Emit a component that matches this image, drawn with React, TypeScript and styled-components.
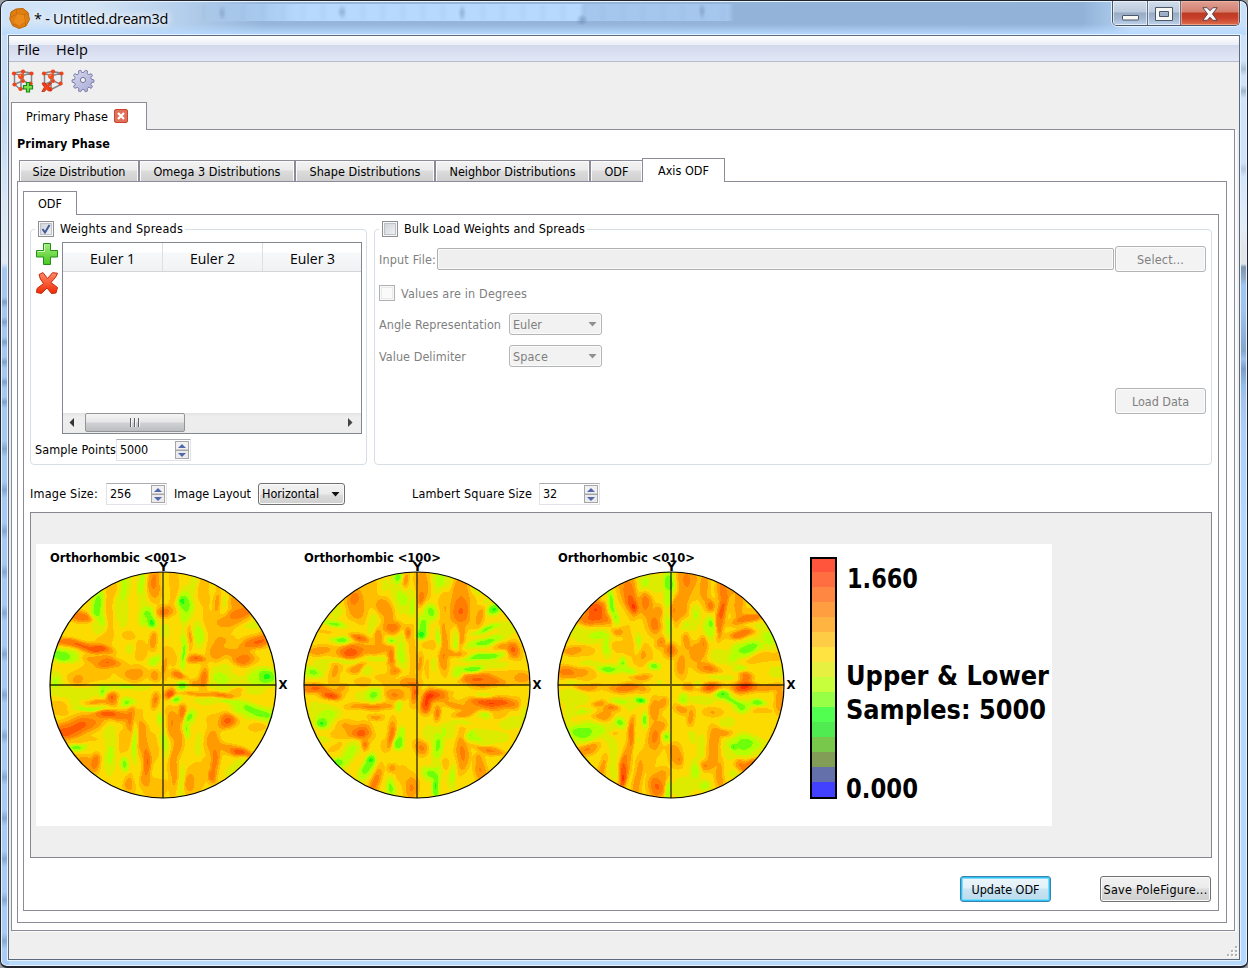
import React, { useLayoutEffect, useMemo, useRef, useState } from "react";
import styled, { createGlobalStyle, css } from "styled-components";

const UI = `"DejaVu Sans Condensed", "DejaVu Sans", sans-serif`;
const SEGOE = `"Open Sans", "Noto Sans", sans-serif`;
const LINE = "#8b8c97";

const Global = createGlobalStyle`
  * { box-sizing: border-box; }
  html, body { margin: 0; padding: 0; background: #9b9da0; overflow: hidden; }
  body { font: 12.5px/16px ${UI}; color: #000; }
`;

/* ---------- text ---------- */

const FitSpan = styled.span<{ $w: number; $segoe?: boolean; $size?: number; $bold?: boolean; $muted?: boolean }>`
  display: block;
  flex: none;
  width: ${(p) => p.$w}px;
  white-space: pre;
  font-family: ${(p) => (p.$segoe ? SEGOE : UI)};
  font-size: ${(p) => p.$size ?? 12.5}px;
  font-weight: ${(p) => (p.$bold ? 700 : 400)};
  color: ${(p) => (p.$muted ? "#7f7f7f" : "#000")};
`;

type FitProps = { w: number; children: string; segoe?: boolean; size?: number; bold?: boolean; muted?: boolean };

/** Label that tracks its letters so that the string fills exactly `w` pixels. */
function Fit({ w, children, segoe, size, bold, muted }: FitProps) {
  const ref = useRef<HTMLElement>(null);
  const [spacing, setSpacing] = useState(0);
  useLayoutEffect(() => {
    const el = ref.current;
    if (el) setSpacing((w - el.getBoundingClientRect().width) / children.length);
  }, [w, children]);
  return (
    <FitSpan $w={w} $segoe={segoe} $size={size} $bold={bold} $muted={muted}>
      <span ref={ref} style={{ letterSpacing: spacing }}>{children}</span>
    </FitSpan>
  );
}

/* ---------- window chrome ---------- */

const Window = styled.div`
  width: 1248px;
  height: 968px;
  display: flex;
  flex-direction: column;
  border: 1px solid #20242e;
  border-width: 1px 1px 2px 1px;
  border-radius: 8px 8px 7px 7px;
  box-shadow: inset 0 0 0 1px #e6f1fc;
  padding: 0 8px 6px 7px;
  background:
    linear-gradient(180deg, #c9e0fa 0, #cfe4fb 60px, #a9c0d9 68px, #cfe4fb 75px, #cfe4fb 84px, #9fb6cf 90px, #cfe4fb 97px, #cfe4fb 162px, #b3cae4 168px, #d3e6fb 176px, #e3edf8 225px, #e5e5e8 245px, #e5e5e8 263px, #7f95ad 266px, #8fa9c6 276px, #a0c6f0 285px, #9fc3ec 310px, #86a6cb 350px, #9dc1ea 358px, #7f9ec4 368px, #94bfe8 385px, #a6c4ec 400px, #aed0f6 430px, #b4d8ff 520px, #b4d8ff 100%) 100% 0 / 8px 100% no-repeat,
    repeating-linear-gradient(180deg, transparent 0 6px, rgba(70, 105, 145, .42) 11px, transparent 17px 20px) 1px 290px / 7px 120px no-repeat,
    repeating-linear-gradient(180deg, transparent 0 10px, rgba(80, 115, 155, .4) 18px, transparent 26px 41px) 1px 430px / 7px 520px no-repeat,
    linear-gradient(180deg, #c6ddf6 0, #c0daf6 120px, #d9e6f5 200px, #e2ebf5 262px, #a6c8ef 268px, #a9cdf5 100%) 0 0 / 8px 100% no-repeat,
    #b9dafb;
`;

const TitleBar = styled.header`
  height: 34px;
  flex: none;
  display: flex;
  align-items: flex-start;
  margin: 0 -7px 0 -6px;
  padding-right: 6px;
  border-top: 1px solid #e9f3fd;
  border-radius: 7px 7px 0 0;
  background:
    radial-gradient(ellipse 5px 7px at 340px 10px, rgba(70, 100, 140, .3), transparent) no-repeat,
    radial-gradient(ellipse 4px 8px at 460px 11px, rgba(70, 100, 140, .3), transparent) no-repeat,
    radial-gradient(ellipse 6px 6px at 580px 18px, rgba(70, 100, 140, .4), transparent) no-repeat,
    radial-gradient(ellipse 4px 8px at 700px 9px, rgba(70, 100, 140, .3), transparent) no-repeat,
    radial-gradient(ellipse 4px 7px at 220px 11px, rgba(70, 100, 140, .25), transparent) no-repeat,
    repeating-linear-gradient(90deg, rgba(120, 155, 200, .08) 0 2px, transparent 6px 16px, rgba(120, 155, 200, .08) 20px) 200px 3px / 530px 15px no-repeat,
    linear-gradient(90deg, rgba(184, 218, 253, 0), #b6d9fd 100px, #b6d9fd 378px, #a6c7ed 382px, #a6c7ed 526px, transparent 532px) 200px 2px / 540px 17px no-repeat,
    linear-gradient(180deg, transparent 22px, #b7daff 33px) no-repeat,
    linear-gradient(90deg, #cfe3f8 0, #d3e4f5 90px, #b4cfec 180px, #95b5da 260px, #92b2d8 1080px, #a6c6e9 1110px, #c9e0fa 1130px);
`;

const TitleIcon = styled.svg`
  margin: 6px 0 0 7px;
`;

const TitleText = styled.div`
  flex: 1;
  padding: 7px 0 0 4px;
  line-height: 20px;
  text-shadow: 0 0 6px #fff, 0 0 8px #fff;
`;

const Controls = styled.div`
  display: flex;
  height: 25px;
  margin-top: -1px;
  border: 1px solid #46566b;
  border-top: 0;
  border-radius: 0 0 5px 5px;
  overflow: hidden;
  box-shadow: 0 1px 0 #e4f0fc, 1px 0 0 #e4f0fc, -1px 0 0 #e4f0fc;
`;

const ControlButton = styled.div<{ $w: number; $close?: boolean; $drop?: number }>`
  width: ${(p) => p.$w}px;
  display: flex;
  align-items: center;
  justify-content: center;
  padding-top: ${(p) => p.$drop ?? 0}px;
  border-right: ${(p) => (p.$close ? 0 : "1px solid #5d6f86")};
  box-shadow: inset 0 0 0 1px ${(p) => (p.$close ? "rgba(255,190,170,.6)" : "rgba(255,255,255,.6)")};
  background: ${(p) =>
    p.$close
      ? "linear-gradient(180deg, #dfa093 0, #d4806f 11px, #bd3a22 12px, #c8402a 17px, #de6f4c 24px)"
      : "linear-gradient(180deg, #d3deec 0, #bac9dc 11px, #97abc4 12px, #a4b8d1 18px, #bfd4ec 24px)"};
`;

const Client = styled.main`
  flex: 1;
  width: 1232px;
  display: flex;
  flex-direction: column;
  border: 1px solid #5d6a7b;
  box-shadow: 0 0 0 1px #e6f2fe;
  background: #efefef;
  overflow: hidden;
`;

const MenuBar = styled.nav`
  height: 26px;
  flex: none;
  display: flex;
  align-items: center;
  gap: 16px;
  padding: 2px 0 0 8px;
  line-height: 24px;
  border-bottom: 1px solid #b6bccc;
  background: linear-gradient(180deg, #fff 0, #e9edf6 9px, #d3d9ec 9px, #e2e7f6 25px);
`;

const ToolBar = styled.div`
  height: 40px;
  flex: none;
  display: flex;
  gap: 6px;
  padding: 7px 0 0 2px;
`;

/* ---------- tabs and panes ---------- */

const TabStrip = styled.div<{ $ml: number }>`
  display: flex;
  align-items: flex-end;
  flex: none;
  margin-left: ${(p) => p.$ml}px;
  margin-bottom: -1px;
  z-index: 1;
`;

const Tab = styled.div<{ $w: number; $h: number; $active?: boolean; $joined?: boolean }>`
  width: ${(p) => p.$w}px;
  height: ${(p) => p.$h}px;
  display: flex;
  align-items: center;
  justify-content: center;
  gap: 6px;
  border: 1px solid ${LINE};
  ${(p) =>
    p.$active
      ? css`
          border-bottom: 0;
          background: #fff;
        `
      : css`
          padding-top: 1px;
          background: linear-gradient(180deg, #f3f3f3 0, #ebebeb 9px, #dcdcdc 10px, #cfcfcf 100%);
          box-shadow: inset 1px 1px 0 #fbfbfb, inset -1px 0 0 #fbfbfb;
        `}
  ${(p) => p.$joined && "border-right: 0;"}
`;

const CloseBadge = styled.svg`
  flex: none;
  margin: -2px 4px 0 0;
`;

const Pane = styled.section<{ $w: number; $h: number; $pad: string }>`
  width: ${(p) => p.$w}px;
  height: ${(p) => p.$h}px;
  flex: none;
  padding: ${(p) => p.$pad};
  border: 1px solid ${LINE};
  background: #fff;
`;

const OuterPane = styled(Pane)`
  margin-left: 2px;
  box-shadow: 2px 1px 0 #fbfbfb;
`;

const Heading = styled.div`
  height: 28px;
  padding-top: 6px;
`;

const Groups = styled.div`
  display: flex;
  gap: 7px;
`;

const Group = styled.div<{ $w: number }>`
  width: ${(p) => p.$w}px;
  height: 236px;
  border: 1px solid #d5dfe5;
  border-radius: 4px;
`;

const GroupTitle = styled.div<{ $gap: number }>`
  display: flex;
  align-items: flex-start;
  width: max-content;
  height: 17px;
  gap: ${(p) => p.$gap}px;
  margin: -9px 0 0 4px;
  padding: 0 2px 0 3px;
  background: #fff;
`;

const Box = styled.span<{ $muted?: boolean }>`
  width: 16px;
  height: 16px;
  flex: none;
  border: 1px solid ${(p) => (p.$muted ? "#b1b1b3" : "#8e8f8f")};
  background: ${(p) => (p.$muted ? "#fafafa" : "linear-gradient(135deg, #cbcfd5, #f6f6f6)")};
  box-shadow: inset 0 0 0 1px #f8f8f8, inset 0 0 0 2px ${(p) => (p.$muted ? "#e8eaee" : "#bcc1cb")};
`;

const GroupBody = styled.div`
  display: flex;
  gap: 4px;
  margin-top: 4px;
  padding-left: 5px;
`;

const IconColumn = styled.div`
  display: flex;
  flex-direction: column;
  gap: 7px;
  padding-top: 1px;
  width: 22px;
`;

const Table = styled.div`
  width: 300px;
  height: 192px;
  display: flex;
  flex-direction: column;
  border: 1px solid #828790;
  background: #fff;
`;

const HeaderRow = styled.div`
  display: flex;
  height: 29px;
  border-bottom: 1px solid #d5d5d5;
  background: linear-gradient(180deg, #fff 0, #fff 9px, #f7f8fa 10px, #f1f2f4 100%);
`;

const HeaderCell = styled.div`
  width: 100px;
  flex: none;
  display: flex;
  justify-content: center;
  align-items: center;
  padding-top: 3px;
  border-right: 1px solid #dedfe1;
  &:last-child { border-right: 0; width: 99px; }
`;

const ScrollBar = styled.div`
  height: 20px;
  margin-top: auto;
  display: flex;
  align-items: center;
  padding: 0 4px 2px 5px;
  background: linear-gradient(180deg, #e3e3e3, #eee 4px, #ececec);
`;

const Thumb = styled.div`
  width: 100px;
  height: 19px;
  margin: 0 auto 0 10px;
  display: flex;
  align-items: center;
  justify-content: center;
  gap: 2px;
  border: 1px solid #959595;
  border-radius: 2px;
  background: linear-gradient(180deg, #f5f5f5 0, #e6e6e8 8px, #d0d1d4 9px, #bcbdc0 100%);
`;

const Grip = styled.i`
  width: 2px;
  height: 9px;
  border-left: 1px solid #5f6063;
  background: #f6f6f6;
`;

const Row = styled.div<{ $mt?: number; $pl?: number; $h?: number }>`
  display: flex;
  align-items: center;
  height: ${(p) => p.$h ?? 22}px;
  margin-top: ${(p) => p.$mt ?? 0}px;
  padding-left: ${(p) => p.$pl ?? 4}px;
`;

const Caption = styled.div`
  flex: none;
  padding-top: 1px;
`;

const SpinBox = styled.div<{ $w: number }>`
  width: ${(p) => p.$w}px;
  height: 22px;
  flex: none;
  display: flex;
  justify-content: space-between;
  align-items: center;
  padding: 0 1px 0 3px;
  border: 1px solid #e2e3ea;
  border-top-color: #abadb3;
  background: #fff;
`;

const Spinner = ({ w, tw, value }: { w: number; tw: number; value: string }) => (
  <SpinBox $w={w}>
    <Fit w={tw}>{value}</Fit>
    <svg width="14" height="18" viewBox="0 0 14 18">
      <rect x=".5" y=".5" width="13" height="8.500" fill="#f1f1f1" stroke="#a7a7a7" />
      <rect x=".5" y="9.500" width="13" height="8" fill="#ebebeb" stroke="#a7a7a7" />
      <path d="M3 7 7 3l4 4z" fill="#5368ac" />
      <path d="M3 12h8l-4 4z" fill="#5368ac" />
    </svg>
  </SpinBox>
);

const ComboBox = styled.div<{ $w: number; $muted?: boolean }>`
  width: ${(p) => p.$w}px;
  height: 22px;
  flex: none;
  display: flex;
  align-items: center;
  justify-content: space-between;
  padding: ${(p) => (p.$muted ? 1 : 0)}px 4px 0 3px;
  border: 1px solid ${(p) => (p.$muted ? "#b1b5b5" : "#707070")};
  border-radius: 3px;
  box-shadow: inset 0 0 0 1px #fbfbfb;
  background: ${(p) =>
    p.$muted ? "#f2f2f2" : "linear-gradient(180deg, #f2f2f2 0, #ebebeb 10px, #dcdcdc 11px, #cfcfcf 100%)"};
`;

const Combo = ({ w, tw, value, muted }: { w: number; tw: number; value: string; muted?: boolean }) => (
  <ComboBox $w={w} $muted={muted}>
    <Fit w={tw} muted={muted}>{value}</Fit>
    <svg width="9" height="5"><path d="M.5 0h8l-4 4.500z" fill={muted ? "#8f8f8f" : "#111"} /></svg>
  </ComboBox>
);

const PathField = styled.div`
  width: 677px;
  height: 22px;
  margin: 0 1px;
  border: 1px solid #afb1b1;
  border-radius: 2px;
  box-shadow: inset 0 0 0 1px #fafafa;
  background: #efefef;
`;

const Button = styled.div<{ $w: number; $kind?: "muted" | "default"; $ml?: number }>`
  width: ${(p) => p.$w}px;
  height: 26px;
  flex: none;
  display: flex;
  align-items: center;
  justify-content: center;
  padding-top: 1px;
  margin-left: ${(p) => p.$ml ?? 0}px;
  border: 1px solid #707070;
  border-radius: 3px;
  box-shadow: inset 0 0 0 1px #fbfbfb;
  background: linear-gradient(180deg, #f2f2f2 0, #ebebeb 11px, #dcdcdc 12px, #cfcfcf 100%);
  ${(p) => p.$kind === "muted" && css`
    border-color: #b1b5b5;
    background: #f3f3f3;
  `}
  ${(p) => p.$kind === "default" && css`
    border-color: #3c7fb1;
    box-shadow: inset 0 0 0 1px #2cc5f5, inset 0 0 0 2px #7fdcf8;
    background: linear-gradient(180deg, #eef6fb 0, #e0f0f9 11px, #c9e4f2 12px, #bbdaec 100%);
  `}
`;

const OptionsRow = styled.div`
  display: flex;
  align-items: center;
  height: 47px;
  padding-top: 11px;
`;

const Gap = styled.span<{ $w: number }>`
  width: ${(p) => p.$w}px;
  flex: none;
`;

const PlotFrame = styled.div`
  width: 1182px;
  height: 346px;
  padding: 31px 0 0 5px;
  border: 1px solid #85868e;
  background: #efefef;
`;

const PlotSvg = styled.svg`
  display: block;
  background: #fff;
  font-family: ${UI};
  font-weight: 700;
`;

const Actions = styled.div`
  display: flex;
  justify-content: flex-end;
  padding-right: 1px;
  margin-top: 18px;
`;

const StatusBar = styled.footer`
  flex: 1;
  display: flex;
  justify-content: flex-end;
  align-items: flex-end;
  padding: 0 1px 2px 0;
`;

/* ---------- icons ---------- */

const Lattice = ({ badge }: { badge: "plus" | "cross" }) => (
  <svg width="24" height="24" viewBox="0 0 24 24">
    <path d="M3 4 11 2.500 20.500 4M3 4l7 3 10.500-3M3.500 4v11.500l6 5M20.500 4v11.500M10 7v13M3.500 15.500l8.500-4 8 4-10 5M12 3v9" fill="none" stroke="#83878a" strokeWidth="1.500" />
    {[[3, 4.500], [12, 2.600], [20.500, 4.500], [3.500, 15.500], [12, 12], [9.500, 20], [19.500, 14.500]].map(([x, y]) => (
      <circle key={`${x}-${y}`} cx={x} cy={y} r="2.100" fill="#ee441b" />
    ))}
    <circle cx="10" cy="7.200" r="2.800" fill="#fb4a16" />
    <circle cx="9.300" cy="6.400" r=".9" fill="#ff9a6a" />
    {badge === "plus" ? (
      <path d="M15.500 13.500h3v3h3v3.500h-3v3h-3v-3h-3v-3.500h3z" fill="#7fe04a" stroke="#178a17" strokeWidth="1.200" />
    ) : (
      <path d="m1 14 3 0 2 2.500 2-2.500h2.500l-2.800 4 2.800 4H7.500L5.500 20l-2 2.500H.8L3.500 18z" fill="#f4421c" stroke="#c22a0e" strokeWidth=".8" />
    )}
  </svg>
);

const Gear = () => {
  const pts: string[] = [];
  for (let i = 0; i < 10; i++) {
    for (const [o, r] of [[-0.34, 8.6], [-0.16, 11], [0.18, 11], [0.26, 8.6]]) {
      const a = ((i + o) / 10) * Math.PI * 2;
      pts.push(`${(12 + r * Math.cos(a)).toFixed(1)},${(12 + r * Math.sin(a)).toFixed(1)}`);
    }
  }
  return (
    <svg width="24" height="24" viewBox="0 0 24 24">
      <defs>
        <linearGradient id="gear" x1="0" y1="0" x2="1" y2="1">
          <stop offset="0" stopColor="#d6d8ee" /><stop offset="1" stopColor="#a9aad6" />
        </linearGradient>
      </defs>
      <polygon points={pts.join(" ")} fill="url(#gear)" stroke="#7c7eaa" strokeWidth="1" strokeLinejoin="round" />
      <circle cx="12" cy="11" r="2.600" fill="#f0f0f4" stroke="#73759c" />
    </svg>
  );
};

const AddIcon = () => (
  <svg width="22" height="22" viewBox="0 0 22 22">
    <defs><linearGradient id="add" x2="0" y2="1"><stop stopColor="#a2ec7c" /><stop offset="1" stopColor="#46c81e" /></linearGradient></defs>
    <path d="M7.500.500h7v7h7v6.500h-7v7.500h-7V14h-7V7.500h7z" fill="url(#add)" stroke="#23901c" />
    <path d="M8.500 1.500v7h-7" fill="none" stroke="#d2f8bc" />
  </svg>
);

const RemoveIcon = () => (
  <svg width="22" height="22" viewBox="0 0 22 22">
    <defs><linearGradient id="rem" x2="0" y2="1"><stop stopColor="#ff8a66" /><stop offset="1" stopColor="#f02a06" /></linearGradient></defs>
    <path d="M3 2.500 7 .600 11.500 6.500 16.500.700l5 .5Q21 4 15 10.500l6.500 5-1.500 5.500-4.500.5L11 16 5.500 21.500l-5-1L1 16.500l6.500-5Q3.500 7 3 2.500z" fill="url(#rem)" stroke="#c22c10" strokeLinejoin="round" />
  </svg>
);

/* ---------- pole figures ---------- */

const LEVELS = ["#14ff14", "#6eff0a", "#b4ff00", "#dceb00", "#fcdc00", "#ffbe00", "#ff9b00", "#ff7d00", "#ff5a00", "#ff3200"];

/* Each sample is: x y rx ry level [rotation], on a 3x grid with the disc centred at 370,435. */
const F001 = `343 125 14 35 7;305 130 10 40 2;250 150 15 50 2;240 230 20 50 3;172 200 14 45 .7;185 240 8 20 2;210 200 10 70 5.5;215 140 15 20 5.5;
125 230 32 10 7.6 15;120 270 40 12 4;170 265 15 12 3;125 315 70 9 8 12;175 325 20 8 9;65 345 32 14 .3 10;105 352 15 10 2 20;200 368 30 12 8;160 355 30 9 6;
200 290 30 12 5.6 -40;115 415 18 15 6.4;150 405 45 25 5;45 425 15 20 2;110 455 40 15 2.5;185 452 8 14 .8;200 440 30 12 2;217 468 12 16 8;180 485 35 5 6.3;150 505 40 5 1.4;
262 487 16 10 .8;270 440 40 6 2;60 500 22 14 5.6;100 490 20 12 3;205 522 28 9 8.6 5;272 535 10 30 7;240 525 30 12 7;110 560 50 18 8.2 -18;70 580 20 15 8;120 600 50 8 5;
115 620 25 8 .7 -8;160 620 25 14 4;165 665 10 18 7.6;140 665 22 13 6.6 30;210 640 12 45 2;250 605 14 25 5.2;253 670 8 15 .8;283 610 6 45 1.5;305 580 10 40 6.4;320 660 9 40 8;
315 715 10 20 6.3;268 728 12 18 6.3;230 715 15 20 4;210 580 15 20 3;340 620 16 30 5;345 745 20 20 5.6;290 700 10 20 4;325 222 18 18 .8;335 248 9 13 -.3;310 242 8 12 2;
375 214 22 12 7.4;375 270 15 20 3;435 190 16 28 .6;428 180 8 9 -.3;430 230 10 15 2;400 130 10 50 5.5;375 120 8 50 3.5;460 130 10 25 3;490 150 12 30 5.5;530 185 8 30 6;
555 185 9 20 3;520 150 8 10 3.5;600 218 42 14 7.6 -30;585 180 18 20 6 40;650 250 30 8 2.3 -15;560 245 30 12 6;600 270 30 6 4 -15;655 302 42 13 8 -20;610 355 25 14 7.5;
570 335 25 10 6;530 335 16 18 6.6;545 300 25 20 5.8;670 338 20 8 4;470 356 18 8 8;480 280 14 26 1.3;450 290 5 25 6;500 260 14 40 5;430 340 6 40 .9;340 300 8 18 6.7;
300 330 14 20 5.6;260 285 15 12 5.5;270 330 15 15 3;340 360 15 9 1.5 -35;385 340 10 16 5.5;385 300 12 10 3.6;280 400 25 14 6.5;345 405 10 12 6.6;415 405 15 9 7.7 15;
375 375 6 25 6;493 415 11 22 8;465 425 12 8 6;545 410 30 25 2;680 410 22 17 -.2;640 410 20 18 1.8;580 440 60 8 3;590 395 25 8 4;425 437 12 10 .3;390 460 12 11 8.8 -30;
410 475 14 8 .5;345 480 8 16 7;310 445 25 10 3.5;460 460 30 5 6;540 465 35 7 7.2;590 448 20 6 6;640 450 20 8 2.5;500 480 30 8 2.3;560 482 30 6 2;620 503 25 10 1 20;
665 520 40 14 .8 8;540 500 20 12 4;590 500 15 15 2.2;425 515 8 20 7.6;395 550 14 30 6.8;415 600 10 40 6.2;450 530 14 12 .8 -40;440 565 6 20 1.1;465 560 9 20 3.5;
358 535 8 14 2;372 600 10 35 1.8;560 543 20 16 8.2;520 540 15 15 5;520 600 16 25 6.5;600 635 40 9 8.8 18;555 625 20 10 5.5;600 590 20 25 4;590 680 40 12 2.6 -45;
523 660 10 40 7.2;516 705 8 14 7.6;475 620 8 30 2.6;450 725 14 25 6.3;425 720 6 40 2.4;400 680 9 50 6.5;480 690 15 40 5;375 720 10 30 4.5;545 720 12 20 4;650 560 20 10 5;640 600 20 12 4.3;440 480 15 10 4;
85 380 25 10 4;235 340 14 14 4;270 200 10 30 4.2;400 250 12 25 4;230 265 8 20 4.2;80 280 20 8 4;450 390 20 10 4;320 530 14 14 4;560 580 18 12 4;400 360 8 14 5;660 400 10 6 1.5;560 270 20 8 5`;

const F100 = `310 110 12 13 .8;335 125 8 20 6.8;325 170 22 32 2;355 200 6 20 1.4;387 130 16 40 6.3;380 172 8 16 8;440 125 20 25 1.7;500 150 18 35 6.6;500 212 22 32 8;
545 150 10 15 2.5;600 205 18 10 0 -40;575 185 8 20 2.5 30;560 220 9 32 6.3 20;535 190 8 30 5;450 200 12 50 5.6;410 215 14 18 .8;383 280 12 12 -.3;385 252 12 20 .8;
180 175 16 20 7.4;190 205 22 30 6.2;225 150 20 30 5.2;265 195 16 22 6.6;285 235 12 30 6.4;297 260 18 12 7.6;130 215 18 15 3;125 250 30 7 .9 15;235 250 12 25 2.6;
145 298 25 8 .6 5;195 293 22 9 8 5;95 275 30 9 4.6;252 290 9 20 6.8;340 280 8 14 7.2;290 300 10 9 1;75 330 30 10 6.4;170 335 25 16 8.5;235 325 45 10 6.7;293 350 9 20 7.7;
320 335 12 40 1.9;140 362 45 6 2.2;250 355 30 6 2.8;190 383 20 9 6.7 -20;120 390 14 25 6;155 405 15 8 4;220 390 12 10 2.4;58 397 18 12 .9;90 375 18 15 3;303 393 14 9 6.9;
270 415 18 14 5.5;205 425 15 10 5.6;355 330 7 60 5.2;345 428 22 12 6.8;360 455 8 25 8;300 462 22 14 6.9;240 463 20 14 .9;200 465 14 14 3;65 445 40 9 8 7;110 466 18 9 9;
145 443 15 8 6;130 492 35 6 4.5;230 498 50 7 7;90 500 35 10 3;313 495 8 12 1;85 545 13 12 -.3;100 525 28 20 1.7;120 582 30 10 5.2;200 575 30 16 7.7;203 577 10 8 9.3;
210 610 8 12 7.3;150 555 20 14 5.8;245 530 16 7 6.2;290 585 8 30 7.3 10;315 608 12 15 .2;320 580 8 14 1.4;270 615 9 15 5;90 590 20 14 3;125 620 15 6 5.6 -30;60 510 10 20 2.7;
165 640 14 38 1.9 35;132 665 12 10 .1;232 657 10 12 -.2;217 685 12 28 .8 30;190 680 6 30 4 30;243 725 10 32 7.3 15;290 742 9 20 .9;293 685 10 10 6.2;290 650 12 10 4;
350 740 14 25 6.9;325 700 15 20 5;380 620 14 16 7;350 650 8 18 4;410 700 18 15 .8;426 738 8 28 0;430 615 12 30 .9;450 570 8 15 2;453 672 8 12 5.5;475 710 9 25 2;
505 635 13 42 7;530 585 14 10 1 -35;555 595 30 18 2.3;580 628 42 8 7 18;560 690 12 25 6.8;552 655 9 12 6;620 660 22 10 3.6;610 590 22 12 2.6;650 545 30 18 3;520 715 14 18 4;
398 485 10 28 9.2 15;435 465 28 12 7.9;413 465 14 9 9.4;428 517 7 16 7.2;480 495 25 7 6.4 10;520 515 30 8 6.6 -20;595 487 38 8 9.8 3;600 490 58 15 7.2;480 465 22 8 4;
570 462 30 6 3;572 524 14 9 1.9;550 415 36 13 8;580 425 40 10 7.2;685 412 20 12 6.6;630 398 30 6 5;490 400 13 13 1.6;535 385 28 8 .3 -3;570 348 45 8 .3 -6;
575 304 40 9 .8 -15;580 265 35 7 1 -18;640 262 25 12 3;657 328 14 18 8.2 -25;622 320 16 8 6;610 372 30 8 3;480 340 25 9 6.5;450 350 10 30 6.8;450 290 8 40 6;500 285 9 28 6.3;
485 300 7 28 1.8;433 290 5 20 1.1;405 312 14 10 5.4;400 380 5 25 5;420 370 7 20 3;378 370 6 20 6.2;440 435 40 8 4;385 540 14 14 4;620 525 20 9 5.5;690 500 10 25 3;
405 580 14 20 2.8;170 255 20 14 4;400 340 8 14 4;270 140 14 24 3.2;250 430 14 8 4;180 445 20 8 4;470 570 10 20 3;500 545 24 8 3;310 640 20 10 4;250 570 14 20 4;430 680 8 14 2.5;490 440 24 6 4;540 440 10 4 5;650 450 30 8 4;260 390 12 10 4`;

const F010 = `365 128 14 25 .2;360 178 9 18 1.3;290 125 16 20 2;325 130 12 20 3;235 140 18 25 6.8;250 180 14 35 8.3 -15;256 197 6 12 9.4;293 190 12 25 7.6;143 210 22 22 9;
140 235 38 13 7.8;190 190 8 38 .7 -15;202 232 8 12 1;165 170 10 8 4;215 200 6 30 4.5 -15;320 252 12 20 7.5;330 215 12 15 6.5;300 220 8 30 5.6;210 273 15 9 6.4;80 270 25 14 2.8;
145 285 32 12 1.9;177 320 10 20 1.5;75 330 25 9 6.6;112 330 20 12 5.2;58 397 24 13 7.4;95 395 30 14 6;120 370 30 8 3;180 385 30 9 .7 5;225 370 9 14 1.1;245 392 14 9 1.9;
315 378 14 9 .6;285 345 18 22 5.8;270 310 7 25 1.9;240 300 10 30 5;215 320 25 12 5.5;340 305 11 11 6.8;367 330 13 15 7.6;380 210 12 25 6.8;415 120 22 40 6.9;400 195 18 38 6.3;
360 250 8 40 1.9;415 255 14 14 2;440 220 12 25 2.1;483 262 12 25 1.6;490 250 6 10 .6;485 197 9 14 7.4;468 140 12 40 6.2;525 150 12 40 7.2;522 210 9 35 8.4 8;512 260 6 24 7.2;
548 140 12 25 6;572 190 12 30 6.6;600 233 35 9 7.8 -15;610 207 20 8 4.6;580 280 35 9 7.7 -12;660 290 18 25 1.9 -35;600 323 26 11 .4 -15;580 330 38 18 1.5 -15;550 355 14 12 1.9;
635 260 20 10 3;650 350 45 10 5.5 -8;580 385 16 8 2;630 385 18 9 4;450 335 22 22 6.6;465 310 8 18 6.8;480 385 24 11 7.1 15;415 300 8 20 6.3;400 375 11 26 6.5;505 345 18 18 3;
520 410 40 8 3;685 395 18 14 2.7;590 440 26 11 9.6;592 412 14 14 7.6;650 441 40 7 6.4;487 440 22 10 8.3;422 442 15 8 6.5;105 440 30 8 7.3;240 443 40 9 7.7;280 410 25 7 6.3;
335 430 20 25 3.4;180 415 30 8 4;120 412 25 6 5;522 463 16 9 0;550 480 30 8 1 22;580 500 16 14 .9;627 488 16 8 .6;693 480 10 30 6.5;640 512 30 7 5;600 545 40 18 4;
495 515 20 10 5.7;535 545 25 12 2.8;460 480 25 9 2.4;407 475 10 14 1.2;400 505 14 12 6.4;428 530 8 22 6.2;345 487 10 12 6.4;320 505 12 26 6.6;275 482 13 8 -.3;220 482 25 8 1.9;
152 488 18 7 6.4;190 503 16 8 7;165 525 22 12 6.4;85 480 35 14 3;100 515 30 7 2.2;60 520 10 20 3;215 548 15 10 .8 30;292 540 6 16 .5;340 555 10 14 6;100 575 26 15 .3;
120 575 48 20 1.6 -8;200 577 12 7 5.2;250 580 7 38 7.6 5;320 590 15 28 7.1;357 588 11 13 .8;120 625 25 11 6.9 -25;190 630 14 45 3;165 680 9 35 6.2 15;226 690 9 42 8.3 8;
223 715 6 18 9.2;243 640 7 30 6.3 5;270 710 9 50 6.4 8;198 695 7 20 2.8;325 740 16 25 8;345 705 14 16 6.3;359 748 6 25 1;300 660 14 25 5;380 640 14 28 6.4 -15;395 655 9 12 6.8;
430 590 10 20 2.8;460 620 9 30 2.7;500 605 14 35 6.8;525 577 22 9 6.4;468 677 13 12 7;490 660 12 20 6.2;515 705 9 35 6.3;440 690 13 22 1.7;470 735 12 10 1.7;405 740 28 25 3;
590 612 24 16 .3;555 618 7 7 -.4;590 620 45 26 1.7;605 675 25 13 8 -30;578 668 12 14 6.9;540 640 14 14 3.2;560 700 16 12 3;650 570 25 20 4;625 630 14 14 3;
80 430 30 10 3;70 455 30 14 3;110 300 24 10 3;270 450 10 6 5;380 440 14 18 4;270 250 12 22 4;440 160 10 20 5;440 270 10 20 3.5;540 310 12 30 4.2;550 200 8 20 4.5;380 560 14 24 4;420 640 10 40 4;270 600 10 30 3.4;250 500 16 14 3.2;450 430 12 10 3;640 420 24 6 4;680 530 10 20 4`;

type Sample = { x: number; y: number; rx: number; ry: number; v: number; c: number; s: number };

const parse = (src: string): Sample[] =>
  src.split(";").map((item) => {
    const [x, y, rx, ry, v, rot = 0] = item.trim().split(/\s+/).map(Number);
    const a = (rot * Math.PI) / 180;
    return { x, y, rx, ry, v, c: Math.cos(a), s: Math.sin(a) };
  });

const BASE = 4.1;

/** Interpolates the samples and returns one run-length path for each contour level. */
function contour(src: string): string[] {
  const samples = parse(src);
  const paths = LEVELS.map(() => "");
  const R = 113;
  for (let j = -R; j < R; j++) {
    const half = Math.floor(Math.sqrt(R * R - (j + 0.5) * (j + 0.5)));
    let start = -half;
    let prev = -1;
    for (let i = -half; i <= half; i++) {
      let level = -1;
      if (i < half) {
        const px0 = 370 + i * 3;
        const py0 = 435 + j * 3;
        const px = px0 + 2.2 * Math.sin(py0 / 15 + px0 / 29);
        const py = py0 + 2.2 * Math.sin(px0 / 14 - py0 / 27);
        let sum = BASE * 0.22;
        let weight = 0.22;
        for (const p of samples) {
          const dx = px - p.x;
          const dy = py - p.y;
          if (dx > 160 || dx < -160 || dy > 160 || dy < -160) continue;
          const u = (dx * p.c + dy * p.s) / p.rx;
          const w = (-dx * p.s + dy * p.c) / p.ry;
          /* exponential falloff keeps peaks pointed and the contours angular */
          const g = Math.exp(-1.15 * Math.pow(u * u + w * w, 0.8));
          sum += g * p.v;
          weight += g;
        }
        const value = BASE + (sum / weight - BASE) * 1.12;
        level = Math.max(0, Math.min(LEVELS.length - 1, Math.round(value)));
      }
      if (level !== prev) {
        if (prev >= 0) paths[prev] += `M${start} ${j}h${i - start}v1h${start - i}z`;
        start = i;
        prev = level;
      }
    }
  }
  return paths;
}

function PoleFigure({ cx, name, src }: { cx: number; name: string; src: string }) {
  const paths = useMemo(() => contour(src), [src]);
  return (
    <g transform={`translate(${cx} 141)`}>
      <circle r="113" fill={LEVELS[4]} />
      <g shapeRendering="crispEdges">
        {paths.map((d, i) => <path key={i} d={d} fill={LEVELS[i]} />)}
      </g>
      <path d="M-113 0H113M0-113V113" stroke="#000" strokeOpacity=".6" strokeWidth="1.800" />
      <circle r="113" fill="none" stroke="#000" strokeWidth="1.200" />
      <text x="-113" y="-123" fontSize="12.500" textLength="137" lengthAdjust="spacingAndGlyphs">{name}</text>
      <text x="-4" y="-114" fontSize="12.500" textLength="9" lengthAdjust="spacingAndGlyphs">Y</text>
      <text x="115.500" y="4" fontSize="12.500" textLength="9" lengthAdjust="spacingAndGlyphs">X</text>
    </g>
  );
}

const BANDS = ["#ff553c", "#ff6e41", "#ff8741", "#ff9e41", "#ffb441", "#ffcc46", "#ffe441", "#e6f041", "#c8ff3c", "#96ff46", "#50ff50", "#50eb50", "#78c84b", "#829d55", "#6470aa", "#4141ff"];

const Plot = () => (
  <PlotSvg width="1016" height="282" viewBox="0 0 1016 282">
    <PoleFigure cx={127} name="Orthorhombic <001>" src={F001} />
    <PoleFigure cx={381} name="Orthorhombic <100>" src={F100} />
    <PoleFigure cx={635} name="Orthorhombic <010>" src={F010} />
    {BANDS.map((c, i) => (
      <rect key={c} x="775" y={i === 0 ? 14 : 13 + i * 15} width="25" height="15" fill={c} />
    ))}
    <rect x="775" y="14" width="25" height="240" fill="none" stroke="#000" strokeWidth="2" />
    <text x="811" y="44" fontSize="26" textLength="71" lengthAdjust="spacingAndGlyphs">1.660</text>
    <text x="810" y="141" fontSize="26" textLength="203" lengthAdjust="spacingAndGlyphs">{"Upper & Lower"}</text>
    <text x="810" y="175" fontSize="26" textLength="200" lengthAdjust="spacingAndGlyphs">Samples: 5000</text>
    <text x="810" y="254" fontSize="26" textLength="72" lengthAdjust="spacingAndGlyphs">0.000</text>
  </PlotSvg>
);

/* ---------- page ---------- */

const PHASE_TABS: { label: string; w: number; tw: number }[] = [
  { label: "Size Distribution", w: 120, tw: 93 },
  { label: "Omega 3 Distributions", w: 156, tw: 127 },
  { label: "Shape Distributions", w: 140, tw: 111 },
  { label: "Neighbor Distributions", w: 155, tw: 126 },
  { label: "ODF", w: 52, tw: 24 },
];

export default function App() {
  return (
    <>
      <Global />
      <Window>
        <TitleBar>
          <TitleIcon width="21" height="21" viewBox="0 0 21 21">
            <path d="m7 1 7-.5 5 4 1.500 7-3.500 6.500-7 2.500-6.500-3L.800 11 2 4z" fill="#e07e10" stroke="#b8650c" />
            <path d="m7 1 1 5-6 3M8 6l7 1 4-2.500M15 7l1 7-6 4-6-2M16 14l1 4" fill="none" stroke="#c96c0a" />
            <path d="m8 6 7 1 1 7-6 4-5-4z" fill="#e98a1a" />
          </TitleIcon>
          <TitleText><Fit w={134} segoe size={14.5}>* - Untitled.dream3d</Fit></TitleText>
          <Controls>
            <ControlButton $w={35} $drop={9}>
              <svg width="17" height="6"><rect x=".5" y=".5" width="16" height="4.500" rx=".5" fill="#f8f8f4" stroke="#4b5668" /></svg>
            </ControlButton>
            <ControlButton $w={33} $drop={1}>
              <svg width="18" height="14">
                <path d="M.5.5h17v13H.5zM4.500 4.500v5h9v-5z" fill="#f8f8f4" fillRule="evenodd" stroke="#4b5668" />
              </svg>
            </ControlButton>
            <ControlButton $w={58} $close $drop={1}>
              <svg width="16" height="14" viewBox="0 0 16 14">
                <path d="M.8.700h4.400L8 3.800 10.800.700h4.400L10.500 7l4.700 6.300h-4.400L8 10.200l-2.800 3.100H.8L5.500 7z" fill="#f8f8f8" stroke="#5a4450" strokeLinejoin="round" />
              </svg>
            </ControlButton>
          </Controls>
        </TitleBar>
        <Client>
          <MenuBar>
            <Fit w={23} segoe size={14.5}>File</Fit>
            <Fit w={32} segoe size={14.5}>Help</Fit>
          </MenuBar>
          <ToolBar>
            <Lattice badge="plus" />
            <Lattice badge="cross" />
            <Gear />
          </ToolBar>
          <TabStrip $ml={2}>
            <Tab $w={136} $h={28} $active>
              <Fit w={82}>Primary Phase</Fit>
              <CloseBadge width="14" height="14" viewBox="0 0 14 14">
                <rect x=".5" y=".5" width="13" height="13" rx="1.500" fill="#e0705a" stroke="#c9452f" />
                <path d="m4 4 6 6M10 4l-6 6" stroke="#fff" strokeWidth="2.200" />
              </CloseBadge>
            </Tab>
          </TabStrip>
          <OuterPane $w={1224} $h={802} $pad="0 0 0 5px">
            <Heading><Fit w={93} bold>Primary Phase</Fit></Heading>
            <TabStrip $ml={2}>
              {PHASE_TABS.map((t) => (
                <Tab key={t.label} $w={t.w} $h={22} $joined={t.label === "ODF"}>
                  <Fit w={t.tw}>{t.label}</Fit>
                </Tab>
              ))}
              <Tab $w={83} $h={24} $active><Fit w={51}>Axis ODF</Fit></Tab>
            </TabStrip>
            <Pane $w={1210} $h={742} $pad="9px 0 0 5px">
              <TabStrip $ml={0}>
                <Tab $w={54} $h={24} $active><Fit w={24}>ODF</Fit></Tab>
              </TabStrip>
              <Pane $w={1196} $h={697} $pad="14px 6px 0 6px">
                <Groups>
                  <Group $w={337}>
                    <GroupTitle $gap={6}>
                      <Box>
                        <svg width="14" height="14" viewBox="0 0 14 14"><path d="m3.500 7 2.500 3.500L10.500 3" fill="none" stroke="#42589c" strokeWidth="2" /></svg>
                      </Box>
                      <Fit w={123}>Weights and Spreads</Fit>
                    </GroupTitle>
                    <GroupBody>
                      <IconColumn><AddIcon /><RemoveIcon /></IconColumn>
                      <Table>
                        <HeaderRow>
                          <HeaderCell><Fit w={45} segoe size={14}>Euler 1</Fit></HeaderCell>
                          <HeaderCell><Fit w={45} segoe size={14}>Euler 2</Fit></HeaderCell>
                          <HeaderCell><Fit w={45} segoe size={14}>Euler 3</Fit></HeaderCell>
                        </HeaderRow>
                        <ScrollBar>
                          <svg width="7" height="9"><path d="M6 0v9L1.500 4.500z" fill="#333" /></svg>
                          <Thumb><Grip /><Grip /><Grip /></Thumb>
                          <svg width="10" height="9"><path d="M1 0v9l4.500-4.500z" fill="#444" /></svg>
                        </ScrollBar>
                      </Table>
                    </GroupBody>
                    <Row $mt={5}>
                      <Fit w={81}>Sample Points</Fit>
                      <Spinner w={75} tw={28} value="5000" />
                    </Row>
                  </Group>
                  <Group $w={838}>
                    <GroupTitle $gap={6}>
                      <Box />
                      <Fit w={181}>Bulk Load Weights and Spreads</Fit>
                    </GroupTitle>
                    <Row $mt={8} $h={26}>
                      <Caption><Fit w={57} muted>Input File:</Fit></Caption>
                      <PathField />
                      <Button $w={91} $kind="muted"><Fit w={47} muted>Select...</Fit></Button>
                    </Row>
                    <Row $mt={13} $h={16}>
                      <Box $muted />
                      <Gap $w={6} />
                      <Caption><Fit w={126} muted>Values are in Degrees</Fit></Caption>
                    </Row>
                    <Row $mt={12}>
                      <Caption><Fit w={122} muted>Angle Representation</Fit></Caption>
                      <Gap $w={8} />
                      <Combo w={93} tw={29} value="Euler" muted />
                    </Row>
                    <Row $mt={10}>
                      <Caption><Fit w={87} muted>Value Delimiter</Fit></Caption>
                      <Gap $w={43} />
                      <Combo w={93} tw={35} value="Space" muted />
                    </Row>
                    <Row $mt={21} $h={26}>
                      <Button $w={91} $kind="muted" $ml={736}><Fit w={57} muted>Load Data</Fit></Button>
                    </Row>
                  </Group>
                </Groups>
                <OptionsRow>
                  <Fit w={68}>Image Size:</Fit>
                  <Gap $w={8} />
                  <Spinner w={61} tw={21} value="256" />
                  <Gap $w={7} />
                  <Fit w={77}>Image Layout</Fit>
                  <Gap $w={7} />
                  <Combo w={87} tw={57} value="Horizontal" />
                  <Gap $w={67} />
                  <Fit w={120}>Lambert Square Size</Fit>
                  <Gap $w={7} />
                  <Spinner w={61} tw={14} value="32" />
                </OptionsRow>
                <PlotFrame><Plot /></PlotFrame>
                <Actions>
                  <Button $w={91} $kind="default"><Fit w={68}>Update ODF</Fit></Button>
                  <Button $w={111} $ml={49}><Fit w={104}>Save PoleFigure...</Fit></Button>
                </Actions>
              </Pane>
            </Pane>
          </OuterPane>
          <StatusBar>
            <svg width="11" height="11">
              {[[8, 0], [4, 4], [8, 4], [0, 8], [4, 8], [8, 8]].map(([x, y]) => (
                <g key={`${x}-${y}`}>
                  <rect x={x + 1} y={y + 1} width="2" height="2" fill="#fff" />
                  <rect x={x} y={y} width="2" height="2" fill="#b4b4b4" />
                </g>
              ))}
            </svg>
          </StatusBar>
        </Client>
      </Window>
    </>
  );
}
